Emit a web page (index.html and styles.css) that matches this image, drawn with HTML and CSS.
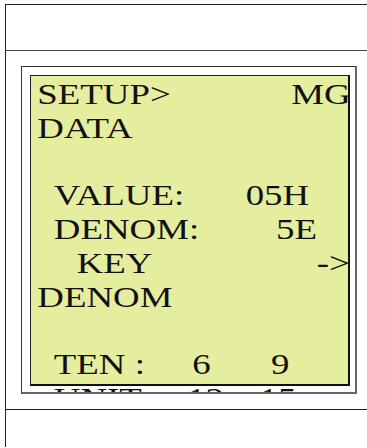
FILE: index.html
```html
<!DOCTYPE html>
<html lang="en">
<head>
    <meta charset="UTF-8">
    <meta name="viewport" content="width=device-width, initial-scale=1.0">
    <title>LCD Setup</title>
    <link rel="stylesheet" href="styles.css">
</head>
<body>

    <div class="frame">
        <div class="row-top"></div>
        <div class="row-main">
            <div class="screen">
                <div class="lcd">
                    <div class="lcd-text">
                        <div class="ln i0"><span class="w-setup">SETUP&gt;</span><span>MG</span></div>
                        <div class="ln i0">DATA</div>
                        <div class="ln"></div>
                        <div class="ln i1"><span class="w-value">VALUE:</span><span>05H</span></div>
                        <div class="ln i1"><span class="w-denom">DENOM:</span><span>5E</span></div>
                        <div class="ln i2"><span class="w-key">KEY</span><span>-&gt;</span></div>
                        <div class="ln i0">DENOM</div>
                        <div class="ln"></div>
                        <div class="ln i1"><span class="w-ten">TEN :</span><span class="w-num">6</span><span>9</span></div>
                        <div class="ln i1"><span class="w-unit">UNIT</span><span class="w-num2">12</span><span>15</span></div>
                    </div>
                </div>
            </div>
        </div>
        <div class="row-bottom"></div>
    </div>

</body>
</html>
```

FILE: styles.css
```css
body {
    margin: 0;
    background-color: #fff;
    overflow: hidden;
}

.frame {
    margin: 4px 0 0 5px;
    border-top: 1px solid #222;
    border-left: 1px solid #222;
}

.row-top {
    height: 45px;
    border-bottom: 1px solid #444;
}

.row-main {
    padding: 15px 0 15px 15px;
    border-bottom: 1px solid #222;
}

.row-bottom {
    height: 37px;
}

.screen {
    width: 320px;
    height: 311px;
    padding: 8px 5px 6px 8px;
    border-style: solid;
    border-color: #333 #666 #666 #333;
    border-width: 1px 2px 2px 1px;
    background-color: #fff;
    overflow: hidden;
}

.lcd {
    height: 308px;
    border-style: solid;
    border-color: #222 #111 #111 #222;
    border-width: 1px 2px 2px 1px;
    background-color: #e5ed9f;
}

.lcd-text {
    padding-top: 2px;
    font-family: "Liberation Serif", "Times New Roman", serif;
    font-size: 29px;
    line-height: 33.75px;
    color: #111;
    transform: scaleX(1.27);
    transform-origin: 0 0;
}

.ln {
    display: flex;
    height: 33.75px;
    white-space: nowrap;
}

.ln span {
    flex-shrink: 0;
}

.i0 { padding-left: 5px; }
.i1 { padding-left: 18px; }
.i2 { padding-left: 36px; }

.w-setup { width: 200px; }
.w-value { width: 151px; }
.w-denom { width: 175px; }
.w-key { width: 189px; }
.w-ten { width: 109px; }
.w-num { width: 62px; }
.w-unit { width: 105px; }
.w-num2 { width: 57px; }
```
